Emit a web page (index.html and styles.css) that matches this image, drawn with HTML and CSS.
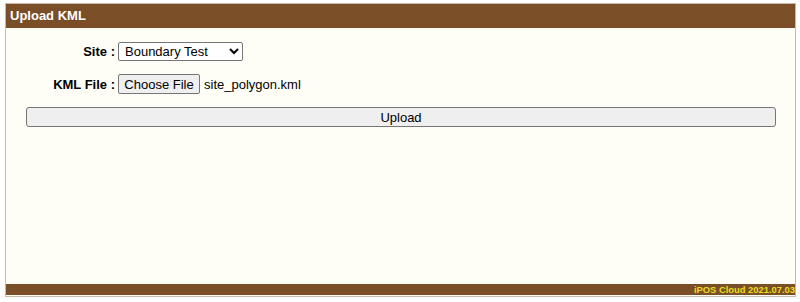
FILE: index.html
```html
<!DOCTYPE html>
<html>
<head>
<meta charset="utf-8">
<link rel="stylesheet" href="styles.css">
</head>
<body>
<div class="panel">
  <div class="title">Upload KML</div>
  <div class="content">
    <div class="form">
      <label class="lbl">Site :</label>
      <div class="field">
        <select class="sel">
          <option>Boundary Test</option>
        </select>
      </div>
      <label class="lbl">KML File :</label>
      <div class="field">
        <button class="choose" type="button">Choose File</button><span class="fname">site_polygon.kml</span>
      </div>
    </div>
    <button class="upload" type="button">Upload</button>
  </div>
  <div class="footer">iPOS Cloud 2021.07.03</div>
</div>
</body>
</html>
```
FILE: styles.css
```css
html, body {
  margin: 0;
  padding: 0;
  background: #ffffff;
}
body {
  padding: 3px 4px 5px 5px;
  font-family: "Liberation Sans", Arial, sans-serif;
}
.panel {
  border: 1px solid #c8b9aa;
  height: 292px;
  display: flex;
  flex-direction: column;
  background: #fefef7;
}
.title {
  background: #7a4e27;
  color: #ffffff;
  font-weight: bold;
  font-size: 13px;
  height: 24px;
  line-height: 24px;
  padding-left: 4px;
}
.content {
  flex: 1;
  padding: 14px 19px 0 20px;
}
.form {
  display: grid;
  grid-template-columns: 89px auto;
  column-gap: 3px;
  row-gap: 13px;
  align-items: center;
}
.lbl {
  text-align: right;
  font-weight: bold;
  font-size: 13px;
  color: #000;
}
.field {
  display: flex;
  align-items: center;
  font-size: 13px;
}
.sel {
  width: 125px;
  height: 19px;
  font-family: "Liberation Sans", Arial, sans-serif;
  font-size: 13px;
  border: 1px solid #767676;
  border-radius: 2px;
  background: #ffffff;
  padding: 0 0 0 2px;
  margin: 0;
  color: #000;
}
.choose {
  width: 82px;
  height: 20px;
  font-family: "Liberation Sans", Arial, sans-serif;
  font-size: 13px;
  background: #efefef;
  border: 1px solid #767676;
  border-radius: 2px;
  padding: 0;
  margin: 0 4px 0 0;
  color: #000;
}
.fname {
  font-size: 13px;
  color: #000;
}
.upload {
  display: block;
  width: 100%;
  height: 20px;
  margin-top: 13px;
  font-family: "Liberation Sans", Arial, sans-serif;
  font-size: 13px;
  background: #efefef;
  border: 1px solid #767676;
  border-radius: 3px;
  padding: 0;
  color: #000;
}
.footer {
  background: #7a4e27;
  color: #ecde1c;
  font-weight: bold;
  font-size: 9.4px;
  height: 11px;
  line-height: 11px;
  text-align: right;
  margin-bottom: 1px;
}
```
